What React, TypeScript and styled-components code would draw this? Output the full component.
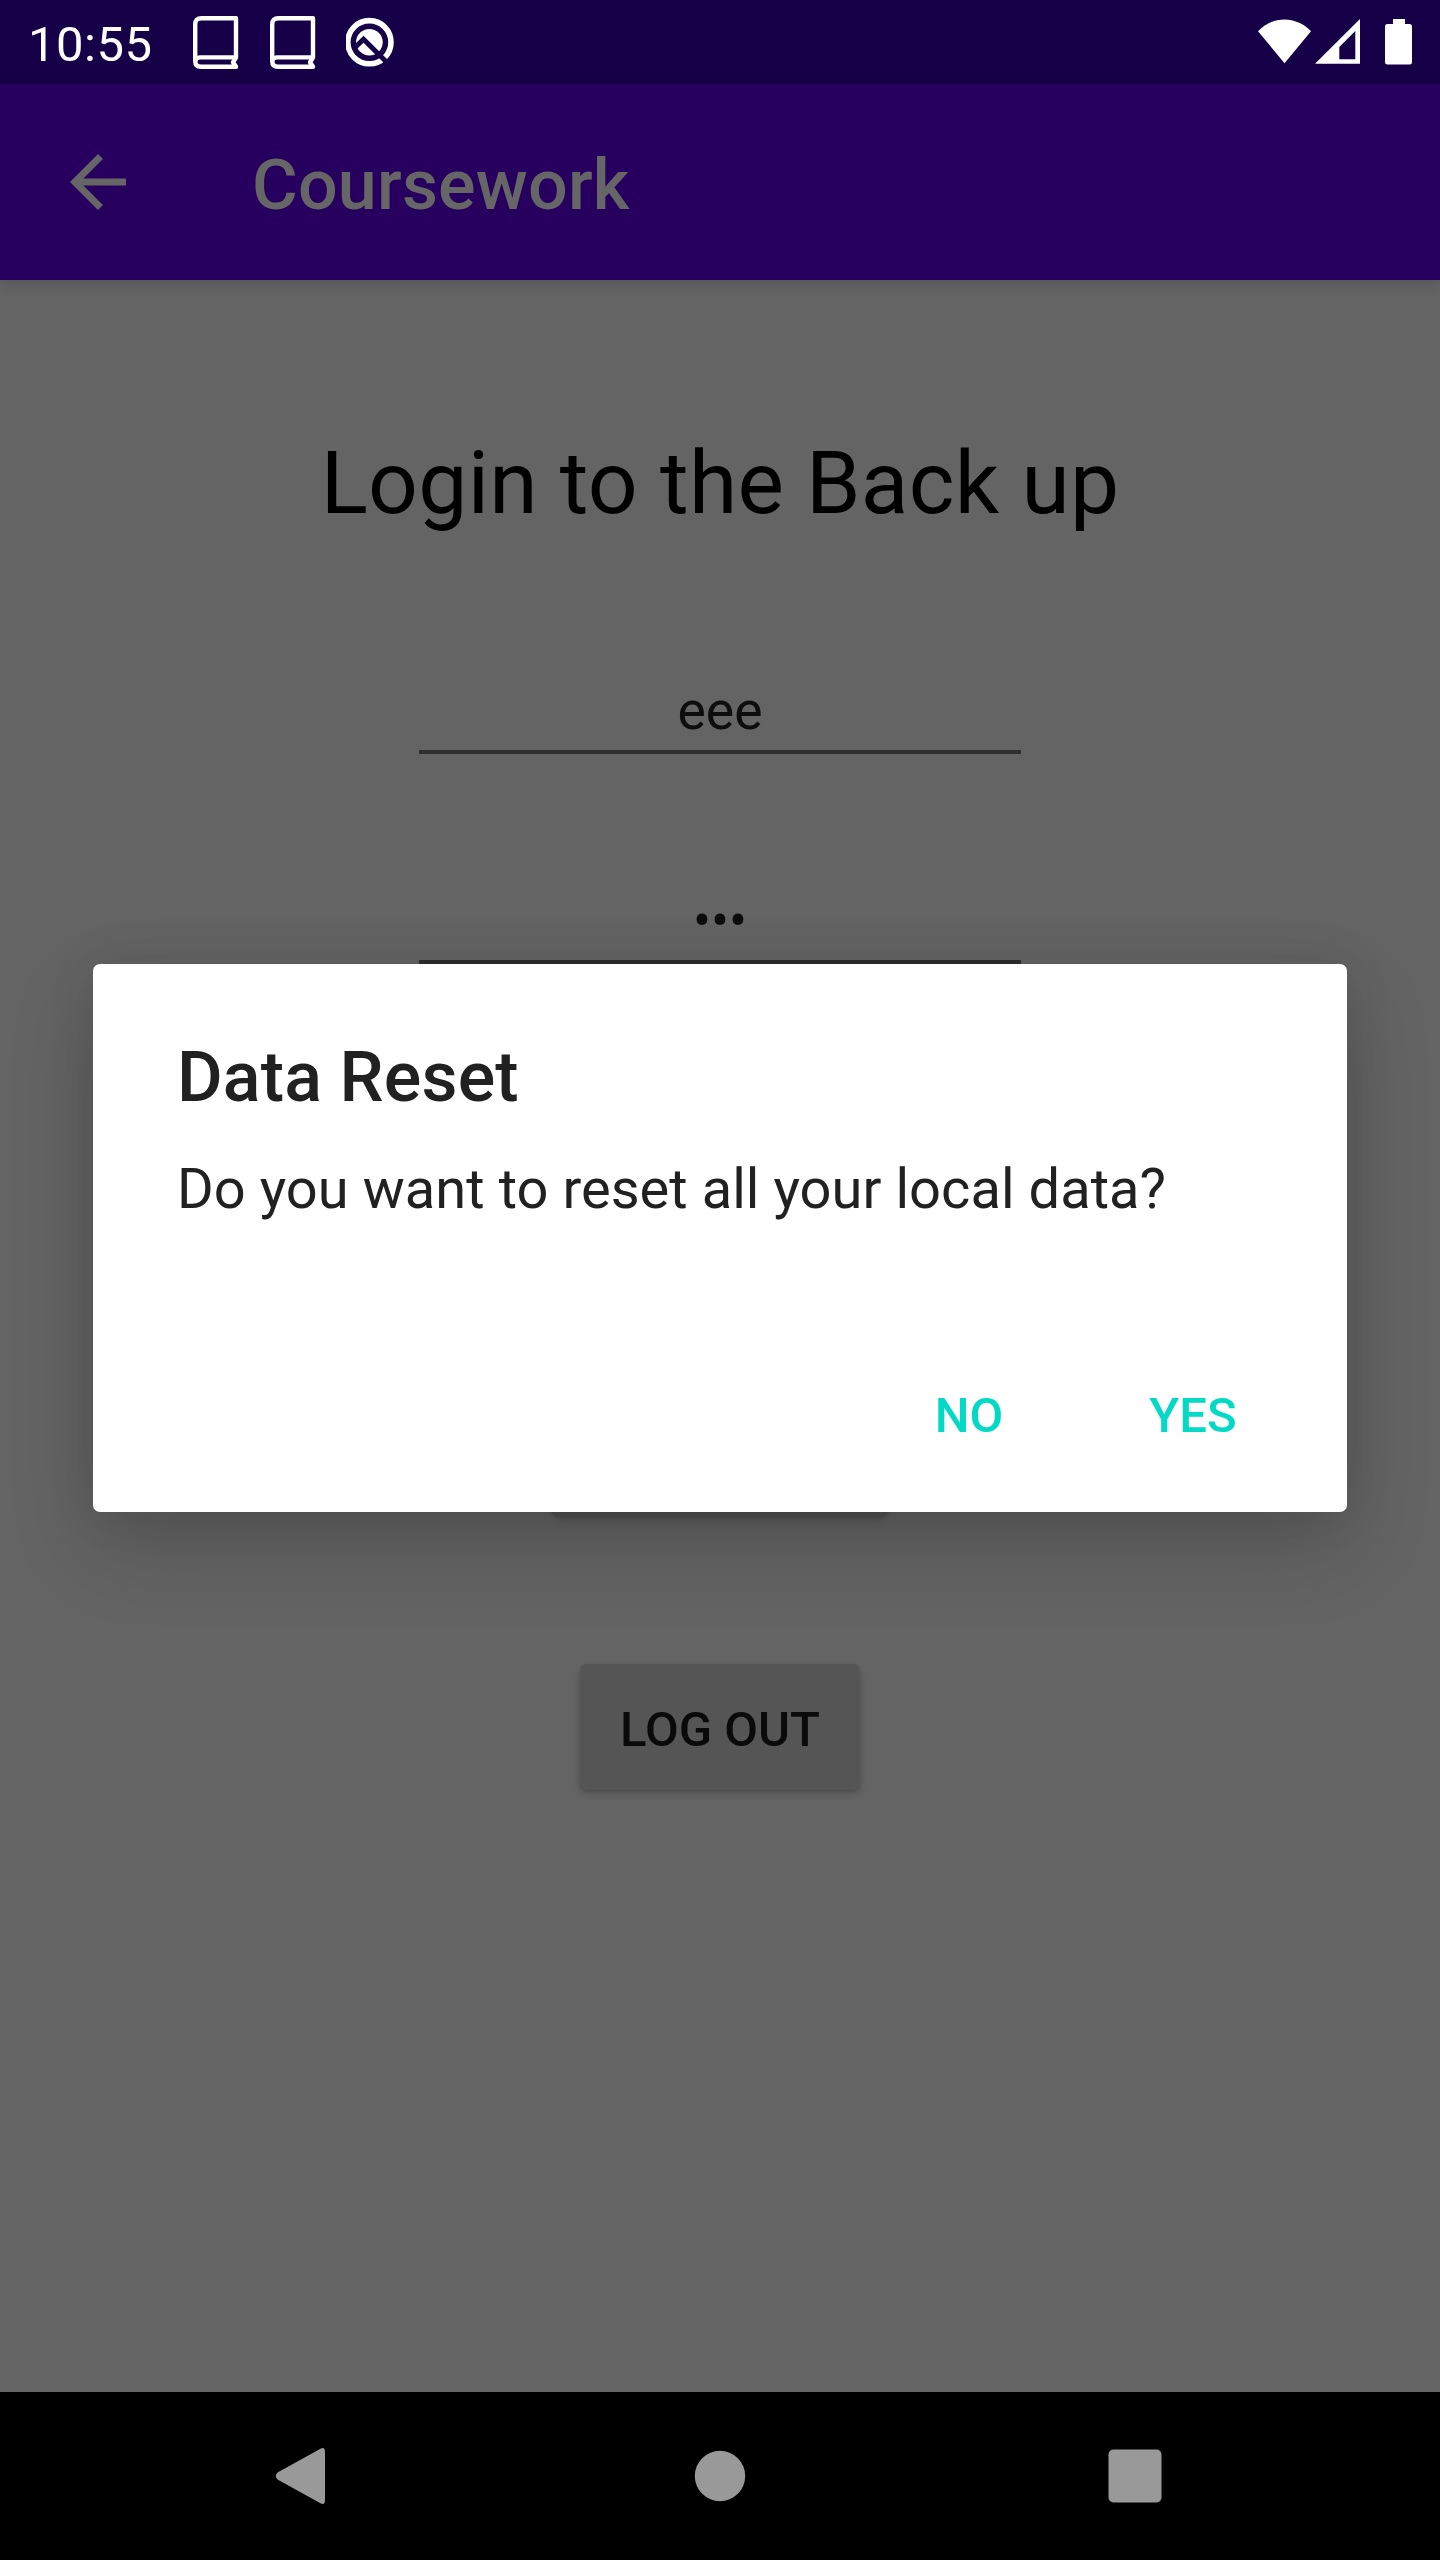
import React from 'react';
import styled, { createGlobalStyle } from 'styled-components';

const GlobalStyle = createGlobalStyle`
  *, *::before, *::after { box-sizing: border-box; }
  body { margin: 0; background: #646464; }
  button, input { font: inherit; border: 0; padding: 0; background: none; color: inherit; }
`;

const Screen = styled.div`
  position: relative;
  display: flex;
  flex-direction: column;
  width: 1440px;
  height: 2560px;
  overflow: hidden;
  background: #646464;
  font-family: Roboto, 'Liberation Sans', sans-serif;
`;

const StatusBar = styled.header`
  display: flex;
  align-items: center;
  flex: none;
  height: 84px;
  padding-left: 28px;
  background: #160047;
  color: #fff;
`;

const Clock = styled.time`
  width: 164px;
  font-size: 49px;
  line-height: 58px;
  letter-spacing: 0.5px;
  padding-top: 5px;
`;

const StatusIcons = styled.div<{ $end?: boolean }>`
  display: flex;
  height: 84px;
  margin-left: ${(p) => (p.$end ? 'auto' : '0')};
`;

const AppBar = styled.div`
  display: flex;
  align-items: center;
  flex: none;
  height: 196px;
  padding-left: 56px;
  background: #27005f;
  color: #666;
  box-shadow: 0 4px 14px rgba(0, 0, 0, 0.15);
`;

const BackButton = styled.button`
  display: flex;
  width: 84px;
  height: 84px;
  margin-right: 112px;
`;

const AppTitle = styled.h1`
  margin: 0;
  padding-top: 5px;
  font-size: 70px;
  line-height: 82px;
  font-weight: 500;
  letter-spacing: 0.2px;
`;

const Content = styled.main`
  display: flex;
  flex-direction: column;
  align-items: center;
  flex: 1;
  padding-top: 151px;
`;

const Heading = styled.h2`
  margin: 0 0 133px;
  font-size: 87.5px;
  line-height: 104px;
  font-weight: 400;
  letter-spacing: 0.28px;
  color: #000;
`;

const Field = styled.input`
  width: 602px;
  height: 86px;
  margin-bottom: 124px;
  padding-top: 2px;
  border-bottom: 4px solid #2e2e2e;
  border-radius: 0;
  outline: 0;
  font-size: 53.5px;
  line-height: 64px;
  text-align: center;
  color: #0d0d0d;
`;

const FormButton = styled.button<{ $width: number; $shaded?: boolean }>`
  width: ${(p) => p.$width}px;
  height: 126px;
  margin-bottom: 148px;
  padding-top: 5px;
  border-radius: 7px;
  background: ${(p) => (p.$shaded ? '#515151' : '#555')};
  box-shadow: 0 4px 8px rgba(0, 0, 0, 0.16), 0 1px 3px rgba(0, 0, 0, 0.12);
  color: #0a0a0a;
  font-size: 49px;
  line-height: 58px;
  font-weight: 500;
`;

const Actions = styled.div`
  display: flex;
  flex-direction: column;
  align-items: center;
  padding-top: 302px;
`;

const NavBar = styled.nav`
  display: flex;
  align-items: center;
  justify-content: space-between;
  flex: none;
  height: 168px;
  padding: 0 263px 0 260px;
  background: #000;
`;

const Overlay = styled.div`
  position: absolute;
  inset: 84px 0 168px;
  display: flex;
  align-items: center;
  justify-content: center;
`;

const Dialog = styled.section`
  display: flex;
  flex-direction: column;
  width: 1254px;
  height: 548px;
  padding: 72px 84px 28px;
  border-radius: 7px;
  background: #fff;
  color: #212121;
  box-shadow: 0 34px 84px rgba(0, 0, 0, 0.18), 0 0 50px rgba(0, 0, 0, 0.09);
`;

const DialogTitle = styled.h3`
  margin: 0;
  font-size: 70px;
  line-height: 82px;
  font-weight: 500;
  letter-spacing: 0.15px;
`;

const Message = styled.p`
  margin: 38px 0 0;
  font-size: 56px;
  line-height: 66px;
  letter-spacing: 0.05px;
`;

const DialogActions = styled.div`
  display: flex;
  justify-content: flex-end;
  margin-top: auto;
  gap: 42px;
`;

const TextButton = styled.button<{ $width: number }>`
  width: ${(p) => p.$width}px;
  height: 136px;
  color: #03dac5;
  font-size: 49px;
  line-height: 58px;
  font-weight: 500;
`;

const BookIcon = () => (
  <svg width="77" height="84" viewBox="0 0 77 84" fill="none" stroke="#fff" strokeWidth="4.4" strokeLinejoin="round">
    <path d="M44 18.2H9.5Q3.2 18.2 3.2 24.5V61Q3.2 66.8 9 66.8H44L41 62.2L44 57.6V18.2Z" />
    <path d="M3.2 61.5Q3.2 57.4 8 57.4H44" />
  </svg>
);

const DebugIcon = () => (
  <svg width="56" height="84" viewBox="0 0 56 84" fill="none">
    <circle cx="23.4" cy="42.2" r="21.6" stroke="#fff" strokeWidth="5.6" />
    <circle cx="23.4" cy="42.2" r="13.3" fill="#fff" />
    <path d="M8.500 48L17.500 39.300L42 63.500" stroke="#160047" strokeWidth="5" />
  </svg>
);

export default function App() {
  return (
    <Screen>
      <GlobalStyle />
      <StatusBar>
        <Clock>10:55</Clock>
        <StatusIcons>
          <BookIcon />
          <BookIcon />
          <DebugIcon />
        </StatusIcons>
        <StatusIcons $end>
          <svg width="182" height="84" viewBox="0 0 182 84" fill="#fff">
            <path d="M0 31.2C15 15.5 38 15.5 53 31.2L26.5 63.2Z" />
            <path fillRule="evenodd" d="M57 63.8L102 19V63.8ZM81.3 59.2H97.3V31L81.3 47Z" />
            <path d="M135 19H147V24H151.5Q154 24 154 26.5V62Q154 64.5 151.5 64.5H129.5Q127 64.5 127 62V26.5Q127 24 129.5 24H135Z" />
          </svg>
        </StatusIcons>
      </StatusBar>
      <AppBar>
        <BackButton aria-label="Back">
          <svg width="84" height="84" viewBox="0 0 24 24" fill="currentColor">
            <path d="M20 11H7.83l5.59-5.59L12 4l-8 8 8 8 1.41-1.41L7.83 13H20z" />
          </svg>
        </BackButton>
        <AppTitle>Coursework</AppTitle>
      </AppBar>
      <Content>
        <Heading>Login to the Back up</Heading>
        <Field defaultValue="eee" />
        <Field type="password" defaultValue="eee" />
        <Actions>
          <FormButton $width={336} $shaded />
          <FormButton $width={280}>LOG OUT</FormButton>
        </Actions>
      </Content>
      <NavBar>
        <svg width="87" height="84" viewBox="0 0 87 84" fill="#999">
          <path d="M17.5 38.500Q14 42 17.5 45.500L60 69Q65 72 65 66V18Q65 12 60 15Z" />
        </svg>
        <svg width="84" height="84" viewBox="0 0 84 84">
          <circle cx="42" cy="42" r="25.2" fill="#999" />
        </svg>
        <svg width="84" height="84" viewBox="0 0 84 84">
          <rect x="15.5" y="15.5" width="53" height="53" rx="5" fill="#999" />
        </svg>
      </NavBar>
      <Overlay>
        <Dialog role="dialog">
          <DialogTitle>Data Reset</DialogTitle>
          <Message>Do you want to reset all your local data?</Message>
          <DialogActions>
            <TextButton $width={224}>NO</TextButton>
            <TextButton $width={140}>YES</TextButton>
          </DialogActions>
        </Dialog>
      </Overlay>
    </Screen>
  );
}
